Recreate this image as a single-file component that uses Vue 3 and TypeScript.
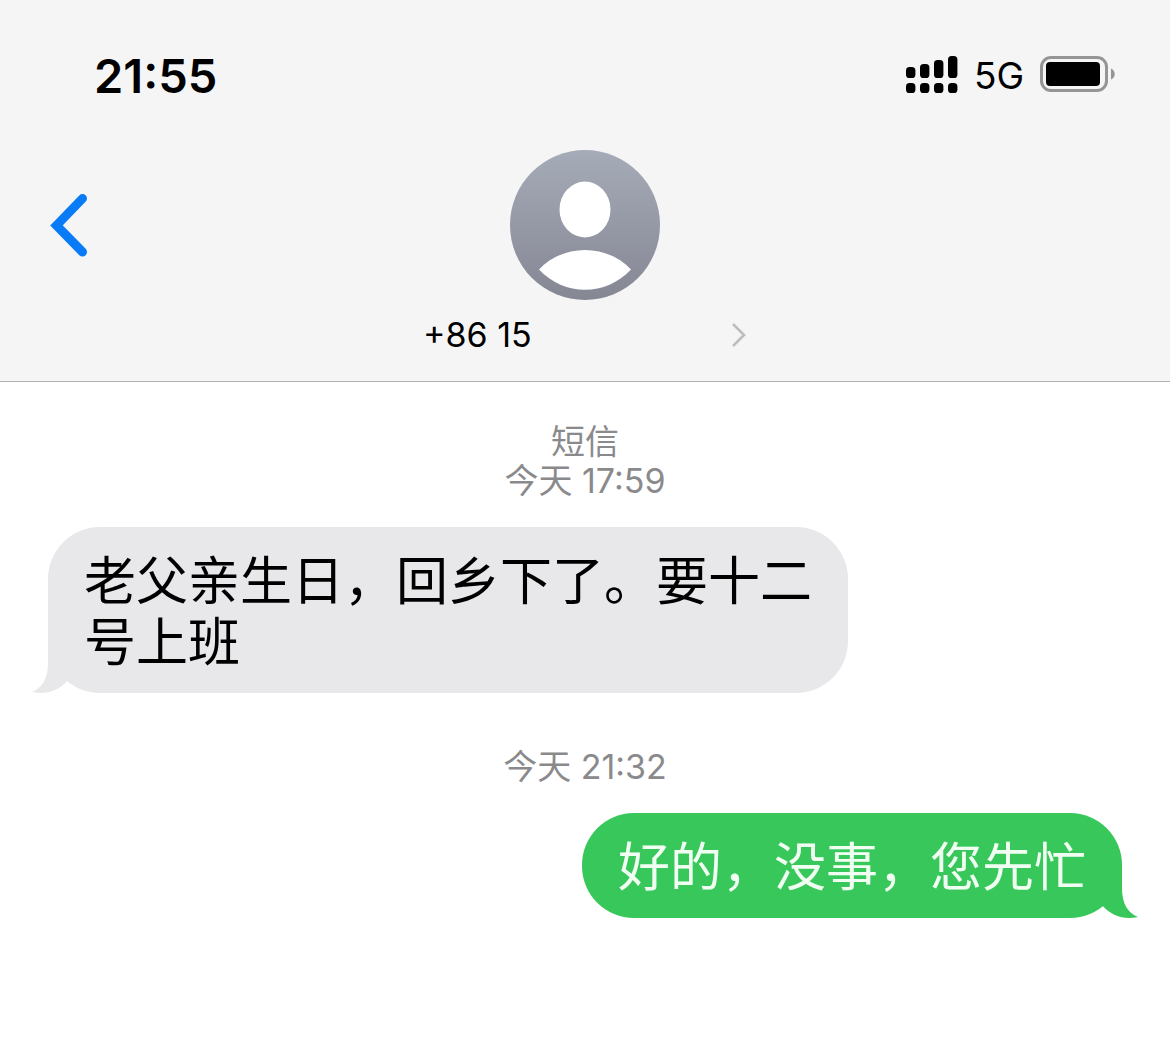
<script setup lang="ts">
interface Message {
  id: number
  side: 'in' | 'out'
  service?: string
  day: string
  time: string
  text: string
}

const clock = '21:55'
const contact = '+86 15'

const messages: Message[] = [
  { id: 1, side: 'in', service: '短信', day: '今天', time: '17:59', text: '老父亲生日，回乡下了。要十二号上班' },
  { id: 2, side: 'out', day: '今天', time: '21:32', text: '好的，没事，您先忙' },
]

const signalBars = [
  { x: 0, top: 11 },
  { x: 14, top: 8 },
  { x: 28, top: 4 },
  { x: 42, top: 0 },
]
</script>

<template>
  <div class="screen">
    <header class="header">
      <div class="status">
        <time class="clock">{{ clock }}</time>
        <div class="indicators">
          <svg class="signal" width="52" height="38" viewBox="0 0 52 38" aria-hidden="true">
            <template v-for="bar in signalBars" :key="bar.x">
              <rect :x="bar.x" :y="bar.top" width="9.4" :height="22 - bar.top" rx="3.6" />
              <rect :x="bar.x" y="27" width="9.4" height="10" rx="3.6" />
            </template>
          </svg>
          <span class="network">5G</span>
          <svg class="battery" width="76" height="38" viewBox="0 0 76 38" aria-hidden="true">
            <rect x="1.5" y="1.5" width="65" height="33" rx="9.5" fill="none" stroke="#959595" stroke-width="3" />
            <rect x="6" y="6" width="54" height="24" rx="4" fill="#000" />
            <path d="M71 12.500C76 15 76 21.500 71 23.500Z" fill="#959595" />
          </svg>
        </div>
      </div>

      <div class="nav">
        <button class="back" type="button" aria-label="返回">
          <svg width="40" height="66" viewBox="0 0 40 66" aria-hidden="true">
            <path d="M34.500 6.500L8.500 33.500L34.500 60" fill="none" stroke="#097bf6" stroke-width="9" stroke-linecap="round" stroke-linejoin="miter" />
          </svg>
        </button>
        <button class="contact" type="button">
          <svg class="avatar" width="150" height="150" viewBox="0 0 150 150" aria-hidden="true">
            <defs>
              <linearGradient id="avatar-fill" x1="0" y1="0" x2="0" y2="1">
                <stop offset="0" stop-color="#a6abb8" />
                <stop offset="1" stop-color="#858793" />
              </linearGradient>
            </defs>
            <circle cx="75" cy="75" r="75" fill="url(#avatar-fill)" />
            <ellipse cx="75" cy="59.500" rx="25.500" ry="28" fill="#fff" />
            <path d="M29 119.500C53 93.500 97 93.500 121 119.500C96 146.500 54 146.500 29 119.500Z" fill="#fff" />
          </svg>
          <span class="contact-line">
            <span>{{ contact }}</span>
            <svg width="16" height="26" viewBox="0 0 16 26" aria-hidden="true">
              <path d="M2 2L13 13L2 24" fill="none" stroke="#bdbdbf" stroke-width="2.6" />
            </svg>
          </span>
        </button>
      </div>
    </header>

    <main class="thread">
      <section v-for="m in messages" :key="m.id" class="entry">
        <div class="stamp">
          <span v-if="m.service">{{ m.service }}</span>
          <span>{{ m.day }} {{ m.time }}</span>
        </div>
        <div class="bubble" :class="m.side">
          <p>{{ m.text }}</p>
          <svg class="tail" width="36" height="52" viewBox="0 0 36 52" aria-hidden="true">
            <path d="M16 0V22C16 38 10 47 0 51C14 54 26 50 35 40.300L36 0Z" fill="currentColor" />
          </svg>
        </div>
      </section>
    </main>
  </div>
</template>

<style>
body {
  margin: 0;
  background: #fff;
}
</style>

<style scoped>
.screen {
  min-height: 100vh;
  background: #fff;
  color: #000;
  font-family: Inter, "Noto Sans CJK SC", sans-serif;
}

.header {
  background: #f5f5f5;
  border-bottom: 1px solid #b0b0b0;
}

.status {
  display: flex;
  align-items: center;
  justify-content: space-between;
  padding: 40px 54px 0 94px;
  height: 70px;
}

.clock {
  font-size: 47px;
  font-weight: 600;
}

.indicators {
  display: flex;
  align-items: center;
  gap: 16px;
}

.network {
  font-size: 37px;
  line-height: 42px;
  padding-top: 2px;
}

.nav {
  display: grid;
  grid-template-columns: 1fr auto 1fr;
  align-items: start;
  padding: 40px 48px 26px;
}

button {
  margin: 0;
  padding: 0;
  border: 0;
  background: none;
  color: inherit;
  font: inherit;
  cursor: pointer;
}

svg {
  display: block;
}

.back {
  justify-self: start;
  height: 150px;
}

.contact {
  display: flex;
  flex-direction: column;
  align-items: center;
  gap: 14px;
}

.contact-line {
  display: flex;
  align-items: center;
  justify-content: space-between;
  width: 324px;
  font-size: 34px;
  line-height: 41px;
}

.thread {
  padding: 40px 48px;
}

.entry {
  display: flex;
  flex-direction: column;
  gap: 27px;
}

.entry + .entry {
  margin-top: 54px;
}

.stamp {
  display: flex;
  flex-direction: column;
  align-items: center;
  color: #8a8a8c;
  font-size: 34px;
  line-height: 39px;
}

.bubble {
  position: relative;
  box-sizing: border-box;
  max-width: calc(100% - 274px);
  padding: 24px 36px 20px;
  border-radius: 52px;
  font-size: 52px;
  line-height: 61px;
}

.bubble p {
  margin: 0;
}

.in {
  align-self: flex-start;
  background: #e8e8ea;
}

.out {
  align-self: flex-end;
  background: #37c75b;
}

.out p {
  color: #f0fff2;
}

.tail {
  position: absolute;
  bottom: 0;
}

.in .tail {
  left: -16px;
  color: #e8e8ea;
}

.out .tail {
  right: -16px;
  color: #37c75b;
  transform: scaleX(-1);
}
</style>
